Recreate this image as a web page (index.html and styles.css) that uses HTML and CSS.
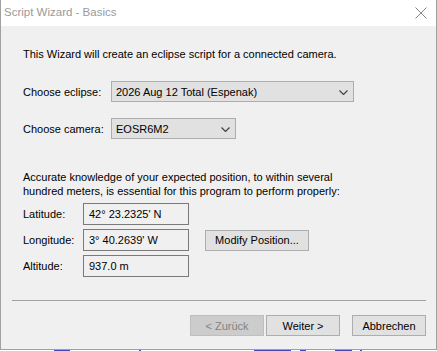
FILE: index.html
```html
<!DOCTYPE html>
<html lang="en">
  <head>
    <meta charset="UTF-8" />
    <meta name="viewport" content="width=device-width, initial-scale=1.0" />
    <title>Script Wizard - Basics</title>
    <link rel="stylesheet" href="styles.css">
  </head>
  <body>
    <div class="window">
      <div class="titlebar">
        <span class="title">Script Wizard - Basics</span>
        <svg class="close" width="12" height="12" viewBox="0 0 12 12">
          <path d="M0.5 0.5 L11.5 11.5 M11.5 0.5 L0.5 11.5" stroke="#888" stroke-width="1" fill="none" />
        </svg>
      </div>
      <div class="content">
        <p class="intro">This Wizard will create an eclipse script for a connected camera.</p>

        <div class="choose-row">
          <label>Choose eclipse:</label>
          <div class="combo combo-wide">
            <span>2026 Aug 12 Total (Espenak)</span>
            <svg class="chev" width="9" height="5" viewBox="0 0 9 5">
              <path d="M0.5 0.5 L4.5 4.5 L8.5 0.5" stroke="#444" stroke-width="1.2" fill="none" />
            </svg>
          </div>
        </div>

        <div class="choose-row">
          <label>Choose camera:</label>
          <div class="combo combo-small">
            <span>EOSR6M2</span>
            <svg class="chev" width="9" height="5" viewBox="0 0 9 5">
              <path d="M0.5 0.5 L4.5 4.5 L8.5 0.5" stroke="#444" stroke-width="1.2" fill="none" />
            </svg>
          </div>
        </div>

        <p class="note">Accurate knowledge of your expected position, to within several<br />hundred meters, is essential for this program to perform properly:</p>

        <div class="position">
          <label>Latitude:</label>
          <div class="field">42° 23.2325' N</div>
          <div></div>
          <label>Longitude:</label>
          <div class="field">3° 40.2639' W</div>
          <button class="btn modify-btn">Modify Position...</button>
          <label>Altitude:</label>
          <div class="field">937.0 m</div>
          <div></div>
        </div>

        <hr class="separator" />

        <div class="buttons">
          <button class="btn disabled">&lt; Zurück</button>
          <button class="btn">Weiter &gt;</button>
          <button class="btn cancel-btn">Abbrechen</button>
        </div>
      </div>
    </div>
    <div class="desktop">
      <span class="bit bit1"></span>
      <span class="bit bit2"></span>
      <span class="bit bit3"></span>
      <span class="bit bit4"></span>
      <span class="bit bit5"></span>
      <span class="bit bit6"></span>
    </div>
  </body>
</html>
```

FILE: styles.css
```css
html,
body {
  margin: 0;
  padding: 0;
  background: #ffffff;
}
body {
  width: 437px;
  height: 351px;
  overflow: hidden;
  font-family: "Liberation Sans", Arial, sans-serif;
  font-size: 11px;
  color: #000000;
}
.window {
  width: 435px;
  height: 349px;
  border: 1px solid #a0a0a0;
  border-top: none;
  background: #f0f0f0;
  display: flex;
  flex-direction: column;
}
.titlebar {
  height: 26px;
  background: #ffffff;
  display: flex;
  align-items: center;
  justify-content: space-between;
  padding: 0 9px 0 3px;
}
.title {
  color: #9a9a9a;
  font-size: 11.5px;
  margin-top: -2px;
}
.close {
  margin-top: -1px;
}
.content {
  padding: 0 10px 0 22px;
  flex: 1;
  display: flex;
  flex-direction: column;
}
label {
  white-space: nowrap;
}
.intro {
  margin: 21px 0 0 0;
  line-height: 15px;
}
.choose-row {
  display: flex;
  align-items: center;
  height: 21px;
}
.intro + .choose-row {
  margin-top: 19px;
}
.choose-row + .choose-row {
  margin-top: 16px;
}
.choose-row label {
  width: 88px;
}
.combo {
  box-sizing: border-box;
  height: 21px;
  border: 1px solid #adadad;
  background: #e1e1e1;
  display: flex;
  align-items: center;
  justify-content: space-between;
  padding: 0 5px 0 4px;
}
.combo-wide {
  width: 243px;
}
.combo-small {
  width: 125px;
}
.chev {
  margin-top: 1px;
}
.note {
  margin: 31px 0 0 0;
  line-height: 14px;
}
.position {
  margin-top: 5px;
  display: grid;
  grid-template-columns: 60px 106px auto;
  grid-auto-rows: 22px;
  row-gap: 4px;
  align-items: center;
}
.field {
  box-sizing: border-box;
  height: 22px;
  border: 1px solid #7a7a7a;
  padding: 0 5px;
  line-height: 20px;
}
.btn {
  box-sizing: border-box;
  height: 21px;
  border: 1px solid #adadad;
  background: #e1e1e1;
  font-family: inherit;
  font-size: 11px;
  color: #000000;
  padding: 0;
  border-radius: 0;
}
.modify-btn {
  width: 104px;
  margin-left: 16px;
}
.separator {
  margin: 23px 0 0 -11px;
  border: none;
  border-top: 1px solid #a0a0a0;
  height: 0;
}
.buttons {
  margin-top: 14px;
  display: flex;
  justify-content: flex-end;
  gap: 2px;
}
.buttons .btn {
  width: 74px;
}
.buttons .cancel-btn {
  margin-left: 10px;
}
.disabled {
  background: #cccccc;
  border-color: #bfbfbf;
  color: #838383;
}
.desktop {
  height: 2px;
  display: flex;
  position: relative;
}
.bit {
  position: absolute;
  top: 0;
  height: 1px;
  background: #4a48b8;
}
.bit1 { left: 54px; width: 16px; }
.bit2 { left: 139px; width: 2px; }
.bit3 { left: 254px; width: 37px; }
.bit4 { left: 300px; width: 6px; }
.bit5 { left: 335px; width: 17px; }
.bit6 { left: 360px; width: 2px; }
```
